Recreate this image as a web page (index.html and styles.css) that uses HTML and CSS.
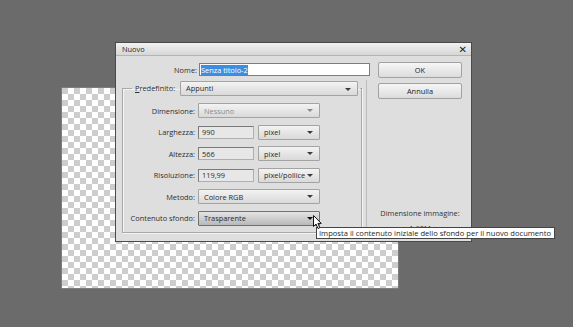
FILE: index.html
```html
<!DOCTYPE html>
<html lang="it">
<head>
    <meta charset="UTF-8">
    <meta name="viewport" content="width=device-width, initial-scale=1.0">
    <title>Nuovo</title>
    <link rel="stylesheet" href="styles.css">
</head>
<body>
    <div class="canvas"></div>

    <div class="dialog">
        <div class="titlebar">
            <span class="title">Nuovo</span>
            <span class="close">&#x2715;</span>
        </div>

        <div class="dialog-body">
            <div class="main">
                <div class="name-row">
                    <span class="label">Nome:</span>
                    <div class="name-field"><span class="selected">Senza titolo-2</span></div>
                </div>

                <div class="panel">
                    <fieldset class="group">
                        <legend class="preset">
                            <span class="label"><u>P</u>redefinito:</span>
                            <div class="select preset-select">Appunti</div>
                        </legend>

                        <div class="grid">
                            <span class="label">Dimensione:</span>
                            <div class="select wide disabled">Nessuno</div>

                            <span class="label">Larghezza:</span>
                            <div class="text-field">990</div>
                            <div class="select">pixel</div>

                            <span class="label">Altezza:</span>
                            <div class="text-field">566</div>
                            <div class="select">pixel</div>

                            <span class="label">Risoluzione:</span>
                            <div class="text-field">119,99</div>
                            <div class="select">pixel/pollice</div>

                            <span class="label">Metodo:</span>
                            <div class="select wide">Colore RGB</div>

                            <span class="label">Contenuto sfondo:</span>
                            <div class="select wide hover">Trasparente</div>
                        </div>
                    </fieldset>
                </div>
            </div>

            <div class="side">
                <button class="button">OK</button>
                <button class="button">Annulla</button>
                <div class="size-info">
                    <div>Dimensione immagine:</div>
                    <div>1,60M</div>
                </div>
            </div>
        </div>
    </div>

    <div class="tooltip">Imposta il contenuto iniziale dello sfondo per il nuovo documento</div>

    <!-- mouse pointer -->
    <svg class="cursor" width="10" height="15" viewBox="0 0 10 15">
        <path d="M0.5 0.5 L0.5 11.5 L3 9 L5 13.5 L6.8 12.7 L4.9 8.4 L8.3 8.4 Z" fill="#fff" stroke="#111" stroke-width="1"/>
    </svg>
</body>
</html>
```

FILE: styles.css
```css
* {
    box-sizing: border-box;
}

html, body {
    margin: 0;
    padding: 0;
    width: 100%;
    height: 100%;
    background: #6b6b6b;
    overflow: hidden;
    font-family: "Open Sans", "DejaVu Sans", sans-serif;
    font-size: 7.4px;
    color: #2a2a2a;
}

/* transparent document behind the dialog */
.canvas {
    position: absolute;
    left: 62px;
    top: 88px;
    width: 336px;
    height: 200px;
    background: repeating-conic-gradient(#ffffff 0 25%, #cdcdcd 0 50%) 0 0 / 12px 12px;
    box-shadow: 0 0 0 1px #7d7d7d;
}

.dialog {
    position: absolute;
    left: 115px;
    top: 42px;
    width: 357px;
    height: 200px;
    background: #dedede;
    border: 1px solid #4a4a4a;
    display: flex;
    flex-direction: column;
}

.titlebar {
    height: 13px;
    display: flex;
    justify-content: space-between;
    align-items: center;
    padding: 0 4px 0 6px;
    background: linear-gradient(#f2f2f2, #d6d6d6);
    border-bottom: 1px solid #b4b4b4;
}

.title {
    color: #1f1f1f;
}

.close {
    font-weight: bold;
    font-size: 10px;
    color: #222;
}

.dialog-body {
    flex: 1;
    display: flex;
}

.main {
    width: 251px;
    flex: none;
    display: flex;
    flex-direction: column;
}

.label {
    color: #2e2e2e;
    white-space: nowrap;
}

.name-row {
    display: flex;
    align-items: center;
    margin-top: 7px;
    height: 13px;
}

.name-row .label {
    flex: none;
    width: 81px;
    text-align: right;
    margin-right: 2px;
}

.name-field {
    position: relative;
    z-index: 1;
    width: 171px;
    height: 13px;
    flex: none;
    background: #fff;
    border: 1px solid #6d7f99;
    padding: 0 1px;
    display: flex;
    align-items: center;
}

.selected {
    background: #3d8ee0;
    color: #fff;
    line-height: 10px;
}

.panel {
    flex: 1;
    margin-top: 4px;
    margin-bottom: 5px;
    border-right: 1px solid #bcbcbc;
    padding: 0 4px 0 6px;
    min-width: 0;
}

.group {
    margin: 0;
    min-width: 0;
    padding: 0 0 6px 0;
    border: 1px solid #a9a9a9;
    box-shadow: inset 1px 1px 0 #f4f4f4, 1px 1px 0 #f4f4f4;
}

.preset {
    display: flex;
    align-items: center;
    margin-left: 9px;
    padding: 0 2px 0 3px;
    height: 16px;
}

.preset .label {
    margin-right: 5px;
}

.preset-select {
    width: 178px;
    height: 16px;
}

.grid {
    display: grid;
    grid-template-columns: 72px 56px 63px;
    grid-auto-rows: 15px;
    column-gap: 3px;
    row-gap: 6.5px;
    margin-top: 7px;
    align-items: center;
}

.grid .label {
    text-align: right;
}

.grid .select:not(.wide) {
    margin-left: 1px;
}

.text-field {
    height: 13px;
    background: #e7e7e7;
    border: 1px solid #7a7a7a;
    border-right-color: #b0b0b0;
    border-bottom-color: #b0b0b0;
    padding: 0 3px;
    display: flex;
    align-items: center;
}

.select {
    position: relative;
    height: 15px;
    background: linear-gradient(#f3f3f3, #d9d9d9);
    border: 1px solid #a3a3a3;
    border-radius: 1px;
    padding: 0 14px 0 5px;
    display: flex;
    align-items: center;
    white-space: nowrap;
    color: #2a2a2a;
}

.select:after {
    content: '';
    position: absolute;
    right: 6px;
    top: 5px;
    border-left: 3px solid transparent;
    border-right: 3px solid transparent;
    border-top: 3px solid #3a3a3a;
}

.preset-select:after {
    top: 6px;
}

.select.wide {
    grid-column: 2 / 4;
}

.select.disabled {
    color: #8c8c8c;
}

.select.disabled:after {
    border-top-color: #8a8a8a;
}

.select.hover {
    background: linear-gradient(#e4e4e4, #b9b9b9);
    border-color: #707070;
}

.select.hover:after {
    border-top-color: #111;
}

.side {
    flex: 1;
    display: flex;
    flex-direction: column;
    align-items: center;
    padding: 6px 6px 0 8px;
}

.button {
    width: 84px;
    height: 16px;
    margin-bottom: 5px;
    padding: 0;
    font-family: inherit;
    font-size: 7.4px;
    color: #222;
    background: linear-gradient(#f6f6f6, #dcdcdc);
    border: 1px solid #a2a2a2;
    border-radius: 2px;
}

.size-info {
    margin-top: auto;
    margin-bottom: 5.5px;
    text-align: center;
    line-height: 15px;
    color: #333;
}

.tooltip {
    position: absolute;
    left: 316px;
    top: 227px;
    height: 12px;
    line-height: 10px;
    padding: 0 3px 0 2px;
    background: #fff;
    border: 1px solid #444;
    color: #1e1e1e;
    font-size: 7.6px;
    white-space: nowrap;
}

.cursor {
    position: absolute;
    left: 313px;
    top: 215px;
}
```
